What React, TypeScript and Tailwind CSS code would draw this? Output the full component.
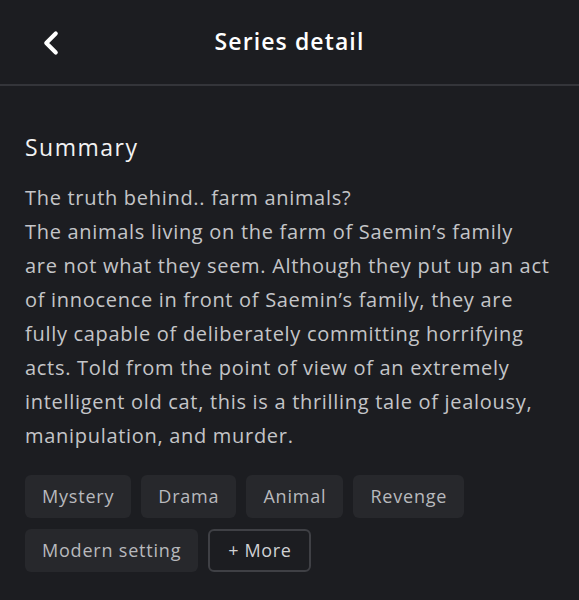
import { ChevronLeft } from 'lucide-react';

const lines = [
  'The truth behind.. farm animals?',
  'The animals living on the farm of Saemin\u2019s family',
  'are not what they seem. Although they put up an act',
  'of innocence in front of Saemin\u2019s family, they are',
  'fully capable of deliberately committing horrifying',
  'acts. Told from the point of view of an extremely',
  'intelligent old cat, this is a thrilling tale of jealousy,',
  'manipulation, and murder.',
];

const tags = ['Mystery', 'Drama', 'Animal', 'Revenge', 'Modern setting'];

export default function App() {
  return (
    <div
      className="w-[579px] h-[600px] bg-[#1c1d21] text-white overflow-hidden"
      style={{ fontFamily: '"Open Sans", "Liberation Sans", sans-serif' }}
    >
      {/* Header */}
      <div className="relative h-[86px] flex items-center justify-center border-b-2 border-[#34353a]">
        <button className="absolute left-[32px] top-[24px] text-white">
          <ChevronLeft className="w-[38px] h-[38px]" strokeWidth={2.6} />
        </button>
        <h1 className="text-[23px] font-semibold tracking-[1.1px] -mt-[1px]">Series detail</h1>
      </div>

      {/* Summary */}
      <div className="px-[25px] pt-[44px]">
        <h2 className="text-[23px] font-medium tracking-[1.5px] text-[#f2f2f3] leading-[34px]">Summary</h2>
        <p className="mt-[17px] text-[20px] tracking-[0.7px] leading-[34px] text-[#c4c5c8] whitespace-nowrap">
          {lines.map((l) => (
            <span key={l} className="block">
              {l}
            </span>
          ))}
        </p>

        {/* Tags */}
        <div className="mt-[22px] flex flex-wrap gap-x-[10px] gap-y-[11px] w-[460px]">
          {tags.map((t) => (
            <span
              key={t}
              className="h-[43px] px-[17px] flex items-center rounded-[6px] bg-[#27282c] text-[18px] tracking-[0.8px] text-[#b8b9bd]"
            >
              {t}
            </span>
          ))}
          <span className="h-[43px] px-[18px] flex items-center rounded-[6px] border-2 border-[#3f4045] text-[18px] tracking-[0.6px] text-[#d0d1d4]">
            + More
          </span>
        </div>
      </div>
    </div>
  );
}
